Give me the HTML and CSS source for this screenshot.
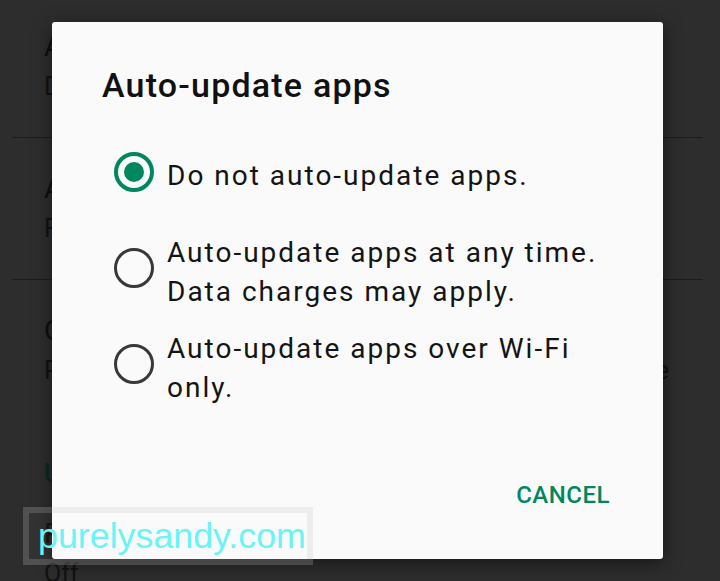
FILE: index.html
```html
<!DOCTYPE html>
<html lang="en">
<head>
    <meta charset="UTF-8">
    <title>Auto-update apps</title>
    <link rel="stylesheet" href="styles.css">
</head>
<body>

    <div class="settings">
        <div class="pref">
            <div class="pref-title">Auto-update apps</div>
            <div class="pref-summary">Do not auto-update apps</div>
        </div>
        <div class="divider"></div>
        <div class="pref">
            <div class="pref-title">Add icon to Home screen</div>
            <div class="pref-summary">For new apps</div>
        </div>
        <div class="divider"></div>
        <div class="pref">
            <div class="pref-title">Clear local search history</div>
            <div class="pref-summary wide">Remove searches from this device</div>
        </div>
        <div class="pref-header">User controls</div>
        <div class="pref short">
            <div class="pref-title">Parental controls</div>
            <div class="pref-summary">Off</div>
        </div>
    </div>

    <div class="dialog">
        <h2 class="dialog-title">Auto-update apps</h2>
        <ul class="options">
            <li class="option checked">
                <span class="radio"></span>
                <span class="option-label">Do not auto-update apps.</span>
            </li>
            <li class="option">
                <span class="radio"></span>
                <span class="option-label">Auto-update apps at any time.<br>Data charges may apply.</span>
            </li>
            <li class="option">
                <span class="radio"></span>
                <span class="option-label">Auto-update apps over Wi-Fi<br>only.</span>
            </li>
        </ul>
        <div class="dialog-actions">
            <button class="text-btn">CANCEL</button>
        </div>
    </div>

    <div class="watermark">purelysandy.com</div>

</body>
</html>
```

FILE: styles.css
```css
html, body {
    height: 100%;
}
body {
    margin: 0;
    overflow: hidden;
    background-color: #2d2d2d;
    font-family: Roboto, "Noto Sans", sans-serif;
}

/* dimmed settings page behind the dialog */
.settings {
    margin-top: -4px;
}
.pref {
    padding: 31px 51px 30px 44px;
}
.pref.short {
    padding-top: 20px;
}
.pref-title {
    font-size: 28px;
    line-height: 40px;
    color: #0f0f0f;
    white-space: nowrap;
}
.pref-summary {
    font-size: 25px;
    line-height: 40px;
    color: #121212;
    white-space: nowrap;
}
.pref-summary.wide {
    text-align: justify;
    text-align-last: justify;
}
.pref-header {
    padding: 33px 0 0 44px;
    font-size: 25px;
    font-weight: 500;
    line-height: 40px;
    color: #0b2a22;
}
.divider {
    height: 1px;
    margin: 0 17px 0 12px;
    background-color: #1c1c1c;
}

/* dialog */
.dialog {
    position: absolute;
    left: 52px;
    top: 22px;
    width: 611px;
    height: 537px;
    box-sizing: border-box;
    padding: 43px 53px 50px 50px;
    display: flex;
    flex-direction: column;
    background-color: #fafafa;
    border-radius: 3px;
    box-shadow: 0 4px 18px rgba(0,0,0,0.5);
}
.dialog-title {
    margin: 0 0 20px;
    font-size: 34px;
    font-weight: 500;
    line-height: 40px;
    letter-spacing: 1.2px;
    color: #111;
}
.options {
    list-style: none;
    margin: 0;
    padding: 0 0 0 12px;
}
.option {
    display: flex;
    align-items: center;
    gap: 13px;
    min-height: 96px;
}
.radio {
    flex: none;
    width: 40px;
    height: 40px;
    box-sizing: border-box;
    border: 3px solid #383838;
    border-radius: 50%;
    display: flex;
    align-items: center;
    justify-content: center;
    margin-top: -3px;
}
.option.checked .radio {
    border: 4px solid #01875f;
}
.option.checked .radio::after {
    content: "";
    width: 20px;
    height: 20px;
    border-radius: 50%;
    background-color: #01875f;
}
.option-label {
    padding-top: 5px;
    font-size: 28px;
    line-height: 39px;
    letter-spacing: 2px;
    color: #141414;
    white-space: nowrap;
}
.dialog-actions {
    margin-top: auto;
    display: flex;
    justify-content: flex-end;
}
.text-btn {
    padding: 0;
    border: none;
    background: none;
    font-family: Roboto, sans-serif;
    font-size: 24px;
    font-weight: 500;
    line-height: 28px;
    letter-spacing: 0.5px;
    color: #01875f;
    cursor: pointer;
}

/* watermark over the screenshot */
.watermark {
    position: absolute;
    left: 23px;
    top: 507px;
    width: 269px;
    height: 46px;
    padding-left: 9px;
    box-sizing: content-box;
    border: 6px solid rgba(190,190,190,0.22);
    background-color: rgba(255,255,255,0.03);
    font-family: "Liberation Sans", Arial, sans-serif;
    font-size: 35.8px;
    line-height: 46px;
    color: #6af4f6;
    white-space: nowrap;
    overflow: hidden;
}
```
